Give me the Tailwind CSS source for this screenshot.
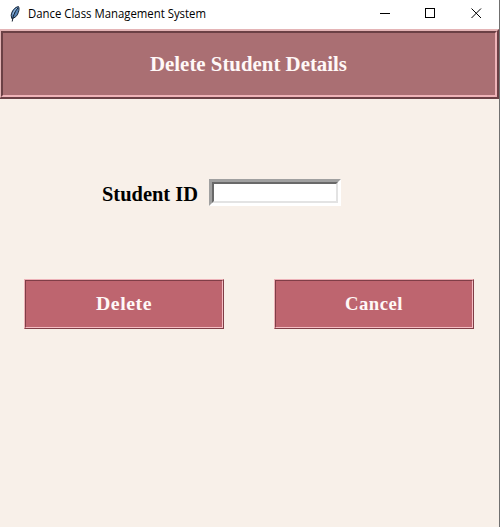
<!DOCTYPE html>
<html lang="en">
<head>
<meta charset="utf-8">
<title>Dance Class Management System</title>
<script src="https://cdn.jsdelivr.net/npm/@tailwindcss/browser@4"></script>
</head>
<body class="overflow-hidden">
<div class="flex h-[527px] w-[500px] flex-col overflow-hidden border-r border-[#707070] bg-[#f8f0e9]">
  <header class="flex h-[29px] shrink-0 items-center bg-white">
    <svg class="ml-[9px] mt-[-2px] h-4 w-3 shrink-0" viewBox="0 0 12 16">
      <path d="M9.500.6C6 1 2.500 5 2.200 9.500L2.800 12.500C5.500 12.200 8.500 10 9.300 6.500C10.200 4 10.300 2 9.500.6Z" fill="#5683b5" stroke="#182536" stroke-width="1"/>
      <path d="M8.800 2C6.500 5 4.500 8 3.200 15.500" fill="none" stroke="#111c2b" stroke-width="1"/>
      <path d="M8 2.200C6 3.500 4.500 6 3.800 8.500" fill="none" stroke="#a8c8e8" stroke-width=".9"/>
    </svg>
    <svg class="ml-[7px] h-[29px] w-[200px] shrink-0 overflow-visible" viewBox="0 0 200 29">
      <text x="0" y="18" textLength="178" lengthAdjust="spacingAndGlyphs" fill="#000" class="font-['Open_Sans','Noto_Sans',sans-serif] text-[12px]">Dance Class Management System</text>
    </svg>
    <svg class="ml-auto mr-[17px] h-[29px] w-[102px] shrink-0" viewBox="0 0 102 29" fill="none" stroke="#000" shape-rendering="crispEdges">
      <path d="M0 13.500H10M45.500 8.500H54.500V17.500H45.500Z"/>
      <path d="M91.500 8.500L101 18M101 8.500L91.500 18" shape-rendering="auto"/>
    </svg>
  </header>
  <section class="-ml-px h-[70px] w-[500px] shrink-0 border-2 border-t-[#e4b4b6] border-l-[#e4b4b6] border-r-[#6b4045] border-b-[#6b4045]">
    <div class="flex h-full items-center justify-center border-2 border-t-[#6b4045] border-l-[#6b4045] border-r-[#efb3b8] border-b-[#efb3b8] bg-[#aa6f73]">
      <svg class="h-[30px] w-[198px] overflow-visible" viewBox="0 0 198 30"><text x="0" y="22" textLength="197" lengthAdjust="spacingAndGlyphs" fill="#fff8f7" class="font-['Liberation_Serif',serif] text-[21px] font-bold">Delete Student Details</text></svg>
    </div>
  </section>
  <main>
    <div class="mt-20 ml-[102px] flex items-center">
      <svg class="h-[27px] w-[107px]" viewBox="0 0 107 27"><text x="0" y="22" textLength="96" lengthAdjust="spacingAndGlyphs" fill="#000" class="font-['Liberation_Serif',serif] text-[21px] font-bold">Student ID</text></svg>
      <div class="h-[27px] w-[132px] border-[3px] border-t-[#a0a0a0] border-l-[#a0a0a0] border-r-white border-b-white">
        <div class="h-full border-2 border-t-[#696969] border-l-[#696969] border-r-[#e3e3e3] border-b-[#e3e3e3] bg-white"></div>
      </div>
    </div>
    <div class="mt-[73px] ml-6 flex gap-[50px]">
      <button class="h-[50px] w-[200px] border border-t-[#edb2b8] border-l-[#edb2b8] border-r-[#803e47] border-b-[#803e47]">
        <span class="flex h-full items-center justify-center border border-t-[#803e47] border-l-[#803e47] border-r-[#f5bdc4] border-b-[#f5bdc4] bg-[#be656f]">
          <svg class="h-[30px] w-[56px] overflow-visible" viewBox="0 0 56 30"><text x="0" y="21" textLength="56" lengthAdjust="spacingAndGlyphs" fill="#fff8f7" class="font-['Liberation_Serif',serif] text-[19px] font-bold tracking-[0.5px]">Delete</text></svg>
        </span>
      </button>
      <button class="h-[50px] w-[200px] border border-t-[#edb2b8] border-l-[#edb2b8] border-r-[#803e47] border-b-[#803e47]">
        <span class="flex h-full items-center justify-center border border-t-[#803e47] border-l-[#803e47] border-r-[#f5bdc4] border-b-[#f5bdc4] bg-[#be656f]">
          <svg class="h-[30px] w-[58px] overflow-visible" viewBox="0 0 58 30"><text x="0" y="21" textLength="58" lengthAdjust="spacingAndGlyphs" fill="#fff8f7" class="font-['Liberation_Serif',serif] text-[19px] font-bold tracking-[0.5px]">Cancel</text></svg>
        </span>
      </button>
    </div>
  </main>
</div>
</body>
</html>
